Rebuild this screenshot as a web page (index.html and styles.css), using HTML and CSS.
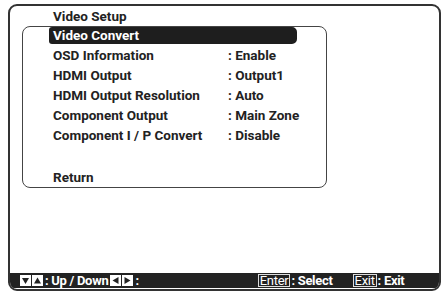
FILE: index.html
```html
<!DOCTYPE html>
<html lang="en">
<head>
    <meta charset="UTF-8">
    <title>Video Setup</title>
    <link rel="stylesheet" href="styles.css">
</head>
<body>
    <div class="screen">
        <div class="title">Video Setup</div>

        <div class="menu">
            <div class="row selected">Video Convert</div>
            <div class="row"><span class="name">OSD Information</span><span class="value">: Enable</span></div>
            <div class="row"><span class="name">HDMI Output</span><span class="value">: Output1</span></div>
            <div class="row"><span class="name">HDMI Output Resolution</span><span class="value">: Auto</span></div>
            <div class="row"><span class="name">Component Output</span><span class="value">: Main Zone</span></div>
            <div class="row"><span class="name">Component I / P Convert</span><span class="value">: Disable</span></div>
            <div class="row blank"></div>
            <div class="row return">Return</div>
        </div>

        <!-- key guide -->
        <div class="guide">
            <span class="key-icon">
                <svg width="11" height="11" viewBox="0 0 11 11"><rect width="11" height="11" fill="#fff"/><path d="M2 3 H9 L5.5 9 Z" fill="#222"/></svg>
            </span>
            <span class="key-icon">
                <svg width="11" height="11" viewBox="0 0 11 11"><rect width="11" height="11" fill="#fff"/><path d="M2 8.5 H9 L5.5 2.5 Z" fill="#222"/></svg>
            </span>
            <span class="label">: Up / Down</span>
            <span class="key-icon">
                <svg width="11" height="11" viewBox="0 0 11 11"><rect width="11" height="11" fill="#fff"/><path d="M8.5 2 V9 L2.5 5.5 Z" fill="#222"/></svg>
            </span>
            <span class="key-icon">
                <svg width="11" height="11" viewBox="0 0 11 11"><rect width="11" height="11" fill="#fff"/><path d="M2.5 2 V9 L8.5 5.5 Z" fill="#222"/></svg>
            </span>
            <span class="label">:</span>

            <span class="key enter">Enter</span><span class="label">: Select</span>
            <span class="key exit">Exit</span><span class="label">: Exit</span>
        </div>
    </div>
</body>
</html>
```

FILE: styles.css
```css
* {
    box-sizing: border-box;
    margin: 0;
    padding: 0;
}

body {
    background-color: #ffffff;
    font-family: Roboto, "Liberation Sans", Arial, sans-serif;
    font-weight: bold;
    font-size: 13.5px;
    color: #222;
}

/* outer frame */
.screen {
    display: flex;
    flex-direction: column;
    width: 433px;
    height: 287px;
    margin: 4px 0 0 8px;
    border: 2px solid #333;
    border-radius: 9px;
    overflow: hidden;
}

.title {
    height: 20px;
    line-height: 20px;
    padding-left: 43px;
}

/* inner menu box */
.menu {
    width: 305px;
    height: 162px;
    margin-left: 12px;
    border: 1px solid #444;
    border-radius: 8px;
}

.row {
    display: flex;
    height: 20px;
    line-height: 20px;
    padding-left: 30px;
}

.row .name {
    width: 175px;
}

.row.selected {
    height: 17px;
    line-height: 17px;
    width: 248px;
    margin-left: 26px;
    margin-bottom: 1px;
    padding-left: 4px;
    background-color: #1e1e1e;
    color: #ffffff;
    border-radius: 3px 5px 5px 3px;
}

.row.return {
    margin-top: 2px;
}

/* bottom bar */
.guide {
    display: flex;
    align-items: center;
    margin-top: auto;
    margin-bottom: 1px;
    height: 15px;
    padding-left: 10px;
    background-color: #222;
    color: #ffffff;
    font-size: 13px;
    letter-spacing: -0.3px;
}

.key-icon {
    display: flex;
    margin-right: 1px;
}

.label {
    margin-left: 1px;
    margin-right: 2px;
}

.key {
    border: 1px solid #ddd;
    line-height: 11px;
    padding: 0 1px;
    font-weight: normal;
}

.enter {
    margin-left: 117px;
}

.exit {
    margin-left: 18px;
}
```
